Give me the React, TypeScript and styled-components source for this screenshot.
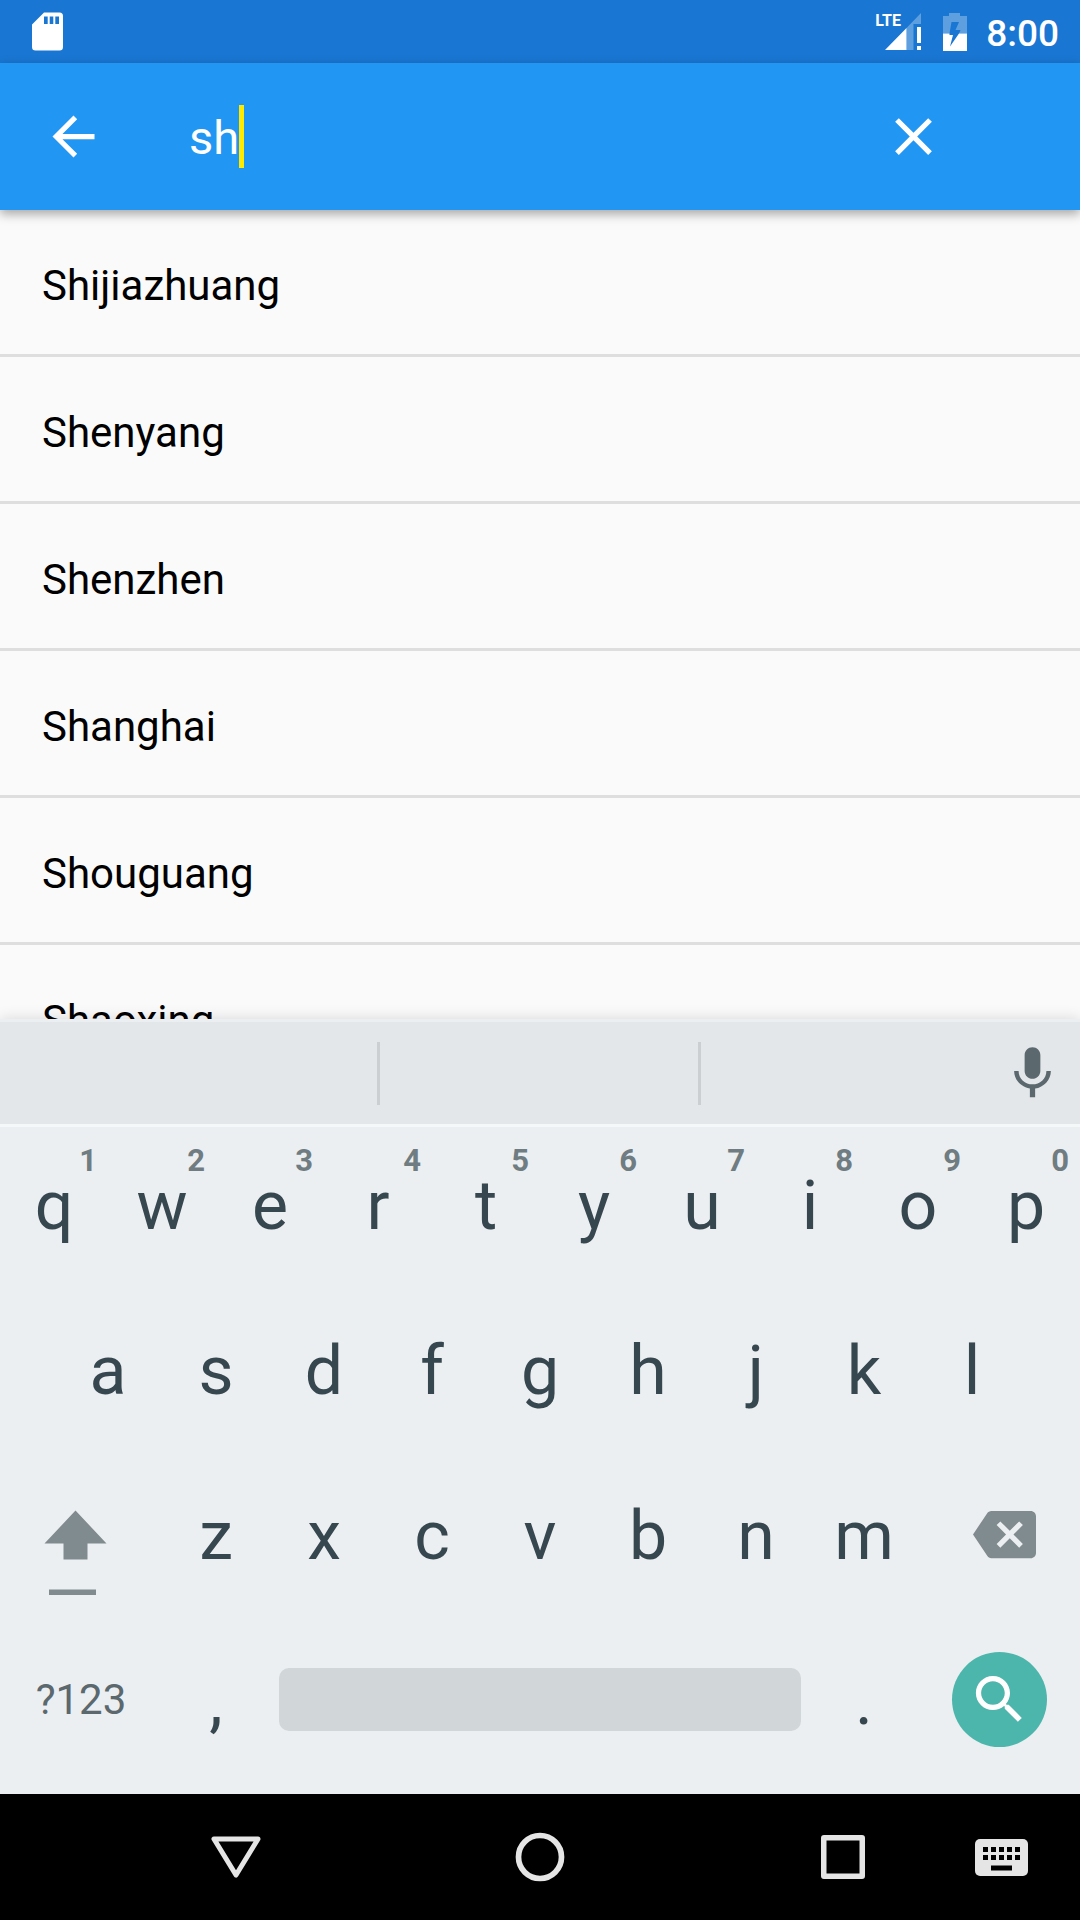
import React from "react";
import styled, { createGlobalStyle } from "styled-components";

const GlobalStyle = createGlobalStyle`
  *, *::before, *::after { box-sizing: border-box; }
  body {
    margin: 0;
    background: #fafafa;
    font-family: Roboto, "Liberation Sans", sans-serif;
  }
  button {
    display: flex;
    align-items: center;
    justify-content: center;
    margin: 0;
    padding: 0;
    border: 0;
    background: none;
    color: inherit;
    font: inherit;
  }
  svg { display: block; flex: none; }
`;

const Screen = styled.div`
  display: flex;
  flex-direction: column;
  height: 100vh;
  overflow: hidden;
`;

const StatusBar = styled.header`
  display: flex;
  flex: none;
  align-items: center;
  justify-content: space-between;
  height: 63px;
  padding: 0 21px 0 32px;
  background: #1976d2;
  color: #fff;
`;

const StatusEnd = styled.div`
  display: flex;
  align-items: center;
  gap: 19px;
`;

const StatusIcons = styled.div`
  display: flex;
  align-items: center;
  gap: 22px;
`;

const Signal = styled.div`
  position: relative;
`;

const NetworkType = styled.span`
  position: absolute;
  top: 0;
  left: -10px;
  font-size: 16px;
  font-weight: 700;
  line-height: 16px;
`;

const Clock = styled.time`
  padding-top: 4px;
  font-size: 37px;
  font-weight: 500;
  line-height: 44px;
`;

const Toolbar = styled.form`
  position: relative;
  z-index: 1;
  display: flex;
  flex: none;
  align-items: center;
  height: 147px;
  margin: 0;
  padding: 0 135px 0 42px;
  background: #2196f3;
  color: #fff;
  box-shadow: 0 4px 10px rgba(0, 0, 0, 0.34);
`;

const ToolbarButton = styled.button`
  flex: none;
`;

const SearchField = styled.label`
  display: flex;
  flex: 1;
  align-items: center;
  min-width: 0;
  padding-left: 84px;
`;

const SearchInput = styled.input`
  field-sizing: content;
  min-width: 0;
  margin: 0;
  padding: 3px 0 0;
  border: 0;
  outline: 0;
  background: none;
  color: #fff;
  caret-color: transparent;
  font: 47px/56px Roboto, "Liberation Sans", sans-serif;
`;

const Caret = styled.span`
  flex: none;
  width: 5px;
  height: 63px;
  background: #ffeb00;
`;

const Results = styled.ul`
  flex: 1;
  min-height: 0;
  margin: 0;
  padding: 0;
  overflow: hidden;
  background: #fafafa;
  list-style: none;
`;

const Result = styled.li`
  padding: 51px 42px 44px;
  border-bottom: 3px solid #dedede;
  color: #000;
  font-size: 42px;
  line-height: 49px;
`;

const Keyboard = styled.section`
  position: relative;
  flex: none;
  background: #eceff1;
  color: #37474f;
  box-shadow: 0 0 14px rgba(0, 0, 0, 0.14);
`;

const Suggestions = styled.div`
  display: grid;
  grid-template-columns: 377fr 321fr 382fr;
  align-items: center;
  height: 108px;
  border-top: 3px solid #eceff1;
  border-bottom: 3px solid #f5f8f9;
  background: #e3e7e9;
  color: #5b686e;
`;

const Suggestion = styled.div`
  display: flex;
  justify-content: flex-end;
  height: 63px;

  & + & {
    border-left: 3px solid #cbcfd1;
  }
`;

const MicButton = styled.button`
  width: 96px;
`;

const Keys = styled.div`
  padding-bottom: 12px;
`;

const KeyRow = styled.div<{ $columns: string; $top?: boolean; $inset?: boolean }>`
  display: grid;
  grid-template-columns: ${(p) => p.$columns};
  height: ${(p) => (p.$top ? 160 : 165)}px;
  padding: 0 ${(p) => (p.$inset ? "5%" : "0")};
`;

const Key = styled.button`
  position: relative;
  min-width: 0;
`;

const LetterKey = styled(Key)`
  && {
    align-items: flex-end;
    padding-bottom: 41px;
  }
  font-size: 68px;
  line-height: 80px;
`;

const Hint = styled.span`
  position: absolute;
  top: 16px;
  right: 11px;
  color: #6f7c81;
  font-size: 31px;
  font-weight: 700;
  line-height: 36px;
`;

const SideKey = styled(Key)<{ $before?: number; $after?: number }>`
  && {
    padding: 0 ${(p) => p.$after ?? 0}px 0 ${(p) => p.$before ?? 0}px;
  }
  color: #808b8f;
`;

const SymbolsKey = styled(Key)`
  color: #5b686e;
  font-size: 42px;
  line-height: 49px;
`;

const SpaceKey = styled(Key)`
  && {
    padding: 0 9px;
  }
`;

const SpaceBar = styled.span`
  width: 100%;
  height: 63px;
  border-radius: 10px;
  background: #d1d6d9;
`;

const SearchDisc = styled.span`
  display: flex;
  align-items: center;
  justify-content: center;
  width: 95px;
  height: 95px;
  border-radius: 50%;
  background: #4db6ac;
  color: #fff;
`;

const NavBar = styled.nav`
  display: flex;
  flex: none;
  height: 126px;
  padding-left: 157px;
  background: #000;
  color: #e5e5e5;
`;

const NavMain = styled.div`
  display: flex;
  flex: 1;
  justify-content: space-between;
`;

const NavButton = styled.button`
  width: 158px;
`;

const Glyph = ({ d }: { d: string }) => (
  <svg width="63" height="63" viewBox="0 0 24 24" fill="currentColor" aria-hidden="true">
    <path d={d} />
  </svg>
);

const BACK = "M20 11H7.8l5.6-5.6L12 4l-8 8 8 8 1.4-1.4L7.8 13H20v-2z";
const CLOSE =
  "M19 6.41L17.59 5 12 10.59 6.41 5 5 6.41 10.59 12 5 17.59 6.41 19 12 13.41 17.59 19 19 17.59 13.41 12z";
const MIC =
  "M12 14c1.66 0 2.99-1.34 2.99-3L15 5c0-1.66-1.34-3-3-3S9 3.34 9 5v6c0 1.66 1.34 3 3 3zm5.3-3c0 3-2.54 5.1-5.3 5.1S6.7 14 6.7 11H5c0 3.41 2.72 6.23 6 6.72V21h2v-3.28c3.28-.48 6-3.3 6-6.72h-1.7z";
const SEARCH =
  "M15.5 14h-.79l-.28-.27C15.41 12.59 16 11.11 16 9.5 16 5.91 13.09 3 9.5 3S3 5.91 3 9.5 5.91 16 9.5 16c1.61 0 3.09-.59 4.23-1.57l.27.28v.79l5 4.99L20.49 19l-4.99-5zm-6 0C7.01 14 5 11.99 5 9.5S7.01 5 9.5 5 14 7.01 14 9.5 11.99 14 9.5 14z";
const BACKSPACE =
  "M22 3H7c-.69 0-1.23.35-1.59.88L0 12l5.41 8.11c.36.53.9.89 1.59.89h15c1.1 0 2-.9 2-2V5c0-1.1-.9-2-2-2zm-3 12.59L17.59 17 14 13.41 10.41 17 9 15.59 12.59 12 9 8.41 10.41 7 14 10.59 17.59 7 19 8.41 15.41 12 19 15.59z";

const SdCardIcon = () => (
  <svg width="31" height="39" viewBox="0 0 31 39" aria-hidden="true">
    <path
      fill="#fff"
      fillRule="evenodd"
      d="M12 .5h15.500a3.500 3.500 0 0 1 3.500 3.500v31a3.500 3.500 0 0 1-3.500 3.500h-24a3.500 3.500 0 0 1-3.500-3.500V12.500zM12 4.500v7.500h3.700V4.500zm5.700 0v7.500h3.600V4.500zm5.600 0v7.500h3.700V4.500z"
    />
  </svg>
);

const SignalIcon = () => (
  <svg width="36" height="37" viewBox="0 0 36 37" fill="#fff" aria-hidden="true">
    <path opacity=".3" d="M21.500 15L36 0v11h-7.500v26h-7z" />
    <path d="M0 37L21.500 15v22zM32 14h4v16h-4zM32 33h4v4h-4z" />
  </svg>
);

const BatteryIcon = () => (
  <svg width="24" height="38" viewBox="0 0 24 38" fill="#fff" aria-hidden="true">
    <path opacity=".3" d="M6 0h11v3h7v17.500h-8l1.500-3.500h-5l3.500-8H8.500l-2 11.500H0V3h6z" />
    <path d="M0 20.500h6.500v1.500h3.500L7 33.500l9-13h8V38H0z" />
  </svg>
);

const ShiftIcon = () => (
  <svg width="63" height="126" viewBox="0 0 63 126" fill="currentColor" aria-hidden="true">
    <path d="M31.500 38.500l31 33h-19v16h-24v-16H.500zM5 117.500h47v5.500H5z" />
  </svg>
);

const NavBackIcon = () => (
  <svg width="50" height="44" viewBox="0 0 50 44" aria-hidden="true">
    <path d="M3 4h44L25 40z" fill="none" stroke="currentColor" strokeWidth="5" strokeLinejoin="round" />
  </svg>
);

const NavHomeIcon = () => (
  <svg width="50" height="50" viewBox="0 0 50 50" aria-hidden="true">
    <circle cx="25" cy="25" r="21.500" fill="none" stroke="currentColor" strokeWidth="5.700" />
  </svg>
);

const NavRecentsIcon = () => (
  <svg width="44" height="44" viewBox="0 0 44 44" aria-hidden="true">
    <path
      fill="currentColor"
      fillRule="evenodd"
      d="M3 0h38a3 3 0 0 1 3 3v38a3 3 0 0 1-3 3H3a3 3 0 0 1-3-3V3a3 3 0 0 1 3-3zM5.500 5.500v33h33v-33z"
    />
  </svg>
);

const NavKeyboardIcon = () => (
  <svg width="53" height="37" viewBox="0 0 53 37" aria-hidden="true">
    <rect width="53" height="37" rx="5" fill="currentColor" />
    {[8, 16].map((y) =>
      [8, 16, 24, 32, 40].map((x) => <rect key={`${x}-${y}`} x={x} y={y} width="5" height="5" fill="#000" />)
    )}
    <rect x="16" y="26.500" width="21" height="5" fill="#000" />
  </svg>
);

const cities = ["Shijiazhuang", "Shenyang", "Shenzhen", "Shanghai", "Shouguang", "Shaoxing"];

const Letters = ({ keys, hints }: { keys: string; hints?: string }) => (
  <>
    {keys.split("").map((letter, i) => (
      <LetterKey key={letter} type="button">
        {letter}
        {hints && <Hint>{hints[i]}</Hint>}
      </LetterKey>
    ))}
  </>
);

export default function App() {
  return (
    <Screen>
      <GlobalStyle />
      <StatusBar>
        <SdCardIcon />
        <StatusEnd>
          <StatusIcons>
            <Signal>
              <NetworkType>LTE</NetworkType>
              <SignalIcon />
            </Signal>
            <BatteryIcon />
          </StatusIcons>
          <Clock>8:00</Clock>
        </StatusEnd>
      </StatusBar>

      <Toolbar role="search" onSubmit={(e) => e.preventDefault()}>
        <ToolbarButton type="button" aria-label="Back">
          <Glyph d={BACK} />
        </ToolbarButton>
        <SearchField>
          <SearchInput type="text" aria-label="Search cities" defaultValue="sh" />
          <Caret />
        </SearchField>
        <ToolbarButton type="reset" aria-label="Clear">
          <Glyph d={CLOSE} />
        </ToolbarButton>
      </Toolbar>

      <Results>
        {cities.map((city) => (
          <Result key={city}>{city}</Result>
        ))}
      </Results>

      <Keyboard aria-label="Keyboard">
        <Suggestions>
          <Suggestion />
          <Suggestion />
          <Suggestion>
            <MicButton type="button" aria-label="Voice input">
              <Glyph d={MIC} />
            </MicButton>
          </Suggestion>
        </Suggestions>
        <Keys>
          <KeyRow $columns="repeat(10, 1fr)" $top>
            <Letters keys="qwertyuiop" hints="1234567890" />
          </KeyRow>
          <KeyRow $columns="repeat(9, 1fr)" $inset>
            <Letters keys="asdfghjkl" />
          </KeyRow>
          <KeyRow $columns="3fr repeat(7, 2fr) 3fr">
            <SideKey type="button" aria-label="Shift" $after={11}>
              <ShiftIcon />
            </SideKey>
            <Letters keys="zxcvbnm" />
            <SideKey type="button" aria-label="Delete" $before={11}>
              <Glyph d={BACKSPACE} />
            </SideKey>
          </KeyRow>
          <KeyRow $columns="3fr 2fr 10fr 2fr 3fr">
            <SymbolsKey type="button">?123</SymbolsKey>
            <Letters keys="," />
            <SpaceKey type="button" aria-label="Space">
              <SpaceBar />
            </SpaceKey>
            <Letters keys="." />
            <SideKey type="button" aria-label="Search">
              <SearchDisc>
                <Glyph d={SEARCH} />
              </SearchDisc>
            </SideKey>
          </KeyRow>
        </Keys>
      </Keyboard>

      <NavBar aria-label="System">
        <NavMain>
          <NavButton type="button" aria-label="Back">
            <NavBackIcon />
          </NavButton>
          <NavButton type="button" aria-label="Home">
            <NavHomeIcon />
          </NavButton>
          <NavButton type="button" aria-label="Recent apps">
            <NavRecentsIcon />
          </NavButton>
        </NavMain>
        <NavButton type="button" aria-label="Switch keyboard">
          <NavKeyboardIcon />
        </NavButton>
      </NavBar>
    </Screen>
  );
}
